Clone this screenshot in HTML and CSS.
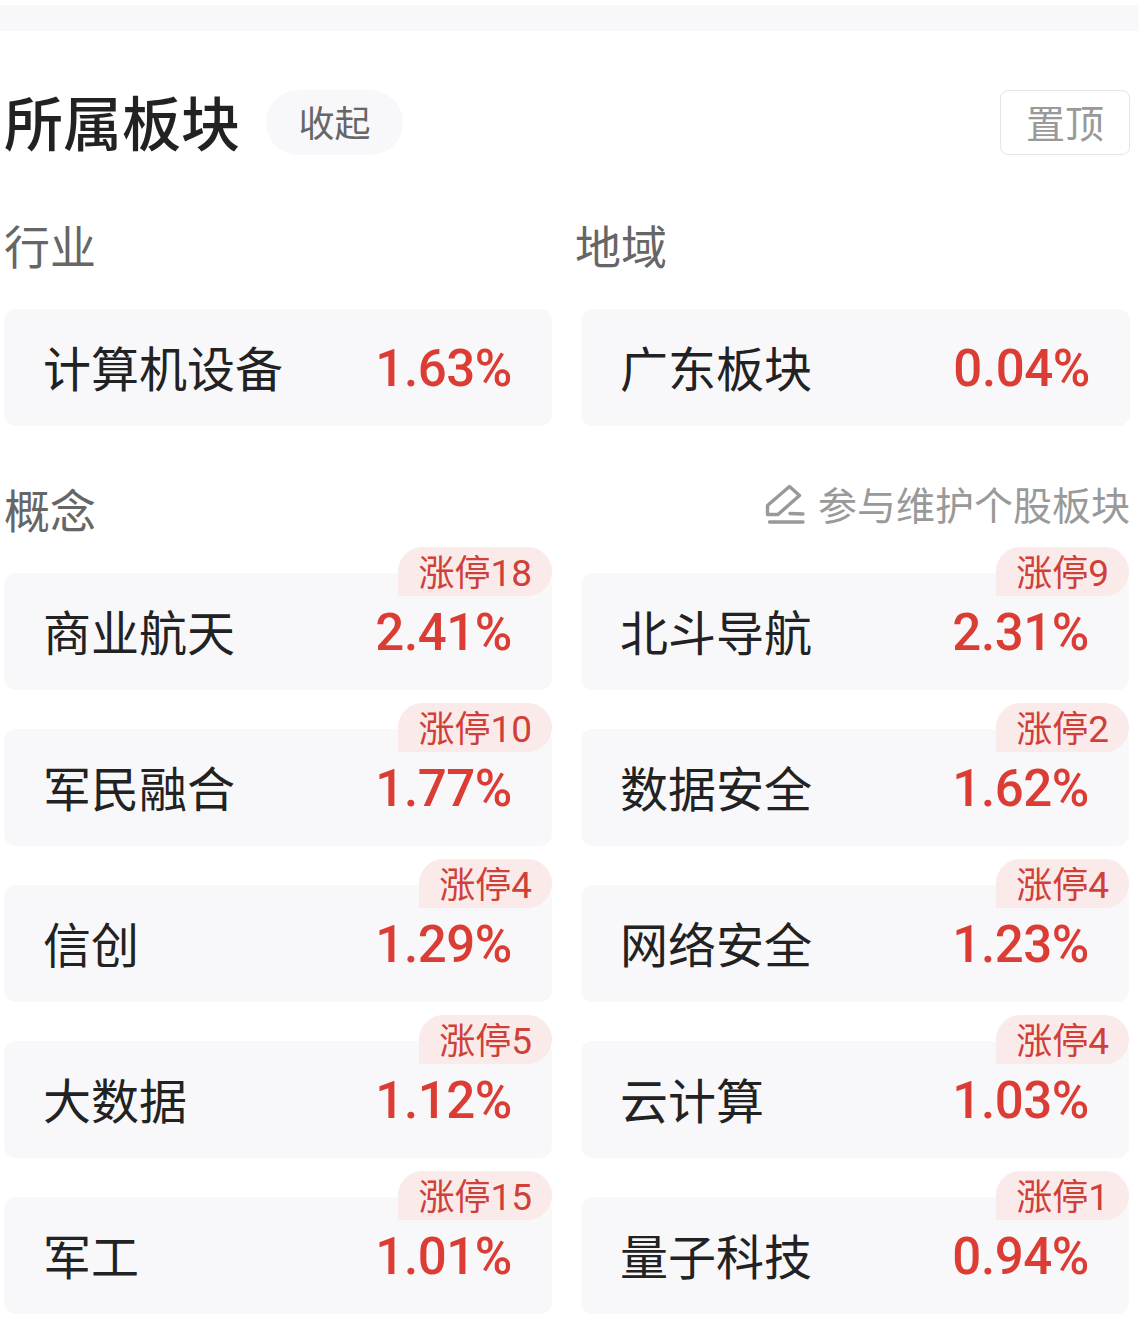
FILE: index.html
```
<!DOCTYPE html>
<html lang="zh-CN">
<head>
  <meta charset="UTF-8" />
  <meta name="viewport" content="width=device-width, initial-scale=1.0" />
  <title>所属板块</title>
  <link rel="stylesheet" href="styles.css">
</head>
<body>
  <div class="divider"></div>
  <main class="container">
    <header>
      <h1>所属板块</h1>
      <button class="btn-fold">收起</button>
      <button class="btn-top">置顶</button>
    </header>

    <div class="grid labels">
      <h2>行业</h2>
      <h2>地域</h2>
    </div>
    <div class="grid">
      <div class="card"><span class="name">计算机设备</span><span class="rate">1.63%</span></div>
      <div class="card"><span class="name">广东板块</span><span class="rate">0.04%</span></div>
    </div>

    <div class="concept-head">
      <h2>概念</h2>
      <a class="edit">
        <svg width="42" height="42" viewBox="0 0 42 42" fill="none" stroke="#999" stroke-width="3.4" stroke-linecap="round" stroke-linejoin="round">
          <path d="M3.5 31.500V22.500L25.500 3.500L35.500 12.500L14 31.500Z" />
          <path d="M26 30.500L39 31M5.500 39H39" />
        </svg>
        <span>参与维护个股板块</span>
      </a>
    </div>
    <div class="grid concepts">
      <div class="card"><span class="name">商业航天</span><span class="rate">2.41%</span><span class="badge">涨停<b>18</b></span></div>
      <div class="card"><span class="name">北斗导航</span><span class="rate">2.31%</span><span class="badge">涨停<b>9</b></span></div>
      <div class="card"><span class="name">军民融合</span><span class="rate">1.77%</span><span class="badge">涨停<b>10</b></span></div>
      <div class="card"><span class="name">数据安全</span><span class="rate">1.62%</span><span class="badge">涨停<b>2</b></span></div>
      <div class="card"><span class="name">信创</span><span class="rate">1.29%</span><span class="badge">涨停<b>4</b></span></div>
      <div class="card"><span class="name">网络安全</span><span class="rate">1.23%</span><span class="badge">涨停<b>4</b></span></div>
      <div class="card"><span class="name">大数据</span><span class="rate">1.12%</span><span class="badge">涨停<b>5</b></span></div>
      <div class="card"><span class="name">云计算</span><span class="rate">1.03%</span><span class="badge">涨停<b>4</b></span></div>
      <div class="card"><span class="name">军工</span><span class="rate">1.01%</span><span class="badge">涨停<b>15</b></span></div>
      <div class="card"><span class="name">量子科技</span><span class="rate">0.94%</span><span class="badge">涨停<b>1</b></span></div>
    </div>
  </main>
</body>
</html>
```
FILE: styles.css
```
* { box-sizing: border-box; margin: 0; padding: 0; }
body { font-family: "Noto Sans CJK SC", sans-serif; background: #fff; color: #222; padding-top: 5px; white-space: nowrap; }
button { font-family: inherit; height: 65px; padding-bottom: 2px; line-height: 61px; }
.divider { height: 26px; background: #f8f8fa; }
.container { padding: 59px 9px 0 4px; }

header { display: flex; align-items: center; height: 65px; }
h1 { font-size: 59px; font-weight: 500; line-height: 65px; padding-bottom: 4px; }
.btn-fold { width: 137px; margin-left: 26px; border: none; border-radius: 33px; background: #f8f8fa; color: #666; font-size: 36px; }
.btn-top { width: 130px; margin-left: auto; border: 1px solid #e5e5e5; border-radius: 8px; background: #fff; color: #999; font-size: 39px; }

h2 { font-size: 46px; font-weight: 400; line-height: 60px; color: #666; }
.grid { display: grid; grid-template-columns: 548px 549px; column-gap: 29px; row-gap: 39px; }
.labels { margin: 59px 0 35px; }
.labels h2:last-child { margin-left: -6px; }

.card { position: relative; display: flex; justify-content: space-between; align-items: center; height: 117px; padding: 0 40px 0 39px; border-radius: 12px; background: #f8f8fa; }
.name { font-size: 48px; line-height: 60px; padding-bottom: 4px; }
.rate { font-family: Roboto, sans-serif; font-size: 51px; font-weight: 500; line-height: 60px; padding-top: 2px; letter-spacing: -0.4px; color: #db3d35; }

.concept-head { display: flex; justify-content: space-between; margin: 52px 0 35px; height: 60px; }
.edit { display: flex; align-items: center; gap: 12px; height: 52px; color: #999; font-size: 39px; line-height: 50px; }
.edit span { padding-bottom: 2px; }

.badge { position: absolute; top: -26px; right: 0; height: 49px; padding: 0 20px; border-radius: 25px 25px 25px 0; background: #faeaea; color: #cf4038; font-size: 36px; line-height: 47px; }
.badge b { font-family: Roboto, sans-serif; font-size: 37px; font-weight: 400; }
.concepts { grid-template-columns: 548px 548px; }
```
